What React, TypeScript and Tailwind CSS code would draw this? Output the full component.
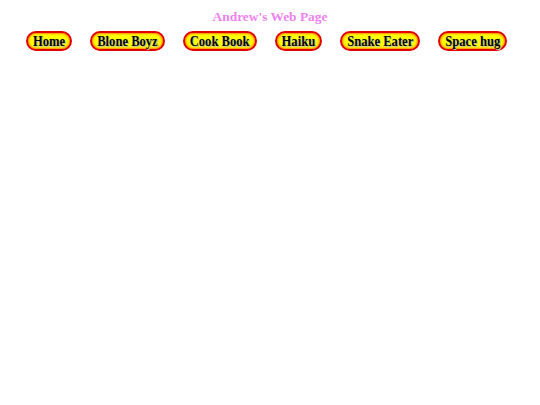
const links = ["Home", "Blone Boyz", "Cook Book", "Haiku", "Snake Eater", "Space hug"];

export default function App() {
  return (
    <div className="min-h-[405px] w-[540px] bg-white font-['Liberation_Serif',serif]">
      <h1 className="pt-[9px] text-center text-[13.4px] font-bold leading-[16px] text-[#ee82ee]">
        Andrew's Web Page
      </h1>
      <nav className="mt-[6px] flex items-center gap-[18px] pl-[26px]">
        {links.map((l) => (
          <a
            key={l}
            href="#"
            className="flex h-[20px] items-center rounded-full border-2 border-[#e00000] bg-[#ffff00] px-[5px] text-black shadow-[inset_0_0_2px_1px_#ff8800]"
          >
            <span className="inline-block scale-y-[1.18] text-[12.6px] font-bold leading-[16px] [text-shadow:1px_1px_0_#c8c8a0]">
              {l}
            </span>
          </a>
        ))}
      </nav>
    </div>
  );
}
